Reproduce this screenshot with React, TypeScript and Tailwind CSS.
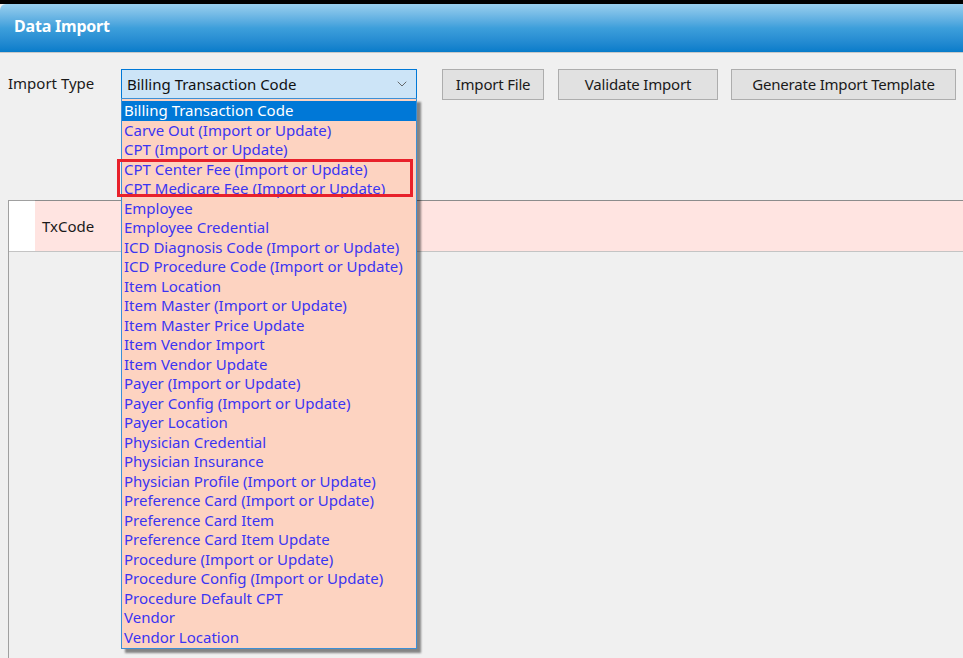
import { ChevronDown } from "lucide-react";

const items = [
  "Billing Transaction Code",
  "Carve Out (Import or Update)",
  "CPT (Import or Update)",
  "CPT Center Fee (Import or Update)",
  "CPT Medicare Fee (Import or Update)",
  "Employee",
  "Employee Credential",
  "ICD Diagnosis Code (Import or Update)",
  "ICD Procedure Code (Import or Update)",
  "Item Location",
  "Item Master (Import or Update)",
  "Item Master Price Update",
  "Item Vendor Import",
  "Item Vendor Update",
  "Payer (Import or Update)",
  "Payer Config (Import or Update)",
  "Payer Location",
  "Physician Credential",
  "Physician Insurance",
  "Physician Profile (Import or Update)",
  "Preference Card (Import or Update)",
  "Preference Card Item",
  "Preference Card Item Update",
  "Procedure (Import or Update)",
  "Procedure Config (Import or Update)",
  "Procedure Default CPT",
  "Vendor",
  "Vendor Location",
];

function Button({ label, className }: { label: string; className?: string }) {
  return (
    <button
      className={
        "h-[31px] border border-[#adadad] bg-[#e1e1e1] text-[15px] text-[#1a1a1a] tracking-[-0.2px] flex items-center justify-center " +
        (className ?? "")
      }
    >
      {label}
    </button>
  );
}

export default function App() {
  return (
    <div
      className="relative w-[963px] h-[658px] overflow-hidden bg-[#f0f0f0] flex flex-col"
      style={{ fontFamily: '"Noto Sans", "Open Sans", sans-serif' }}
    >
      <div className="h-[4px] bg-black shrink-0" />
      <div className="h-[49px] shrink-0 rounded-tl-[6px] bg-gradient-to-b from-[#98cfee] via-[#3d9fdb] to-[#077cca] flex items-center pl-[14px] pb-[5px] border-b border-[#c9c9c9]">
        <span className="text-white font-bold text-[16px] tracking-[-0.2px]">Data Import</span>
      </div>

      <div className="flex items-start pt-[16px] pl-[8px] shrink-0">
        <span className="text-[15px] text-[#1a1a1a] mt-[3px] w-[113px]">Import Type</span>
        <div className="relative w-[296px]">
          <div className="h-[30px] border border-[#0078d7] bg-[#cce4f7] flex items-center justify-between pl-[5px] pr-[6px]">
            <span className="text-[15px] text-[#111]">Billing Transaction Code</span>
            <ChevronDown size={16} strokeWidth={1.3} className="text-[#555]" />
          </div>
          <div className="absolute left-0 top-[29px] z-10 w-[296px] border border-[#3c8fd6] bg-[#fdd3c1] pt-[2px] pb-[1px] shadow-[4px_4px_2px_rgba(0,0,0,0.45)]">
            {items.map((it, i) => (
              <div
                key={it}
                className={
                  "h-[19.5px] leading-[19.5px] pl-[2px] text-[15px] whitespace-nowrap " +
                  (i === 0 ? "bg-[#0078d7] text-white" : "text-[#3b35f2]")
                }
              >
                {it}
              </div>
            ))}
            <div className="absolute left-[-5px] top-[60px] w-[296px] h-[38px] border-[3px] border-[#e8212b]" />
          </div>
        </div>
        <Button label="Import File" className="ml-[25px] w-[102px]" />
        <Button label="Validate Import" className="ml-[14px] w-[160px]" />
        <Button label="Generate Import Template" className="ml-[13px] w-[225px]" />
      </div>

      <div className="flex-1 mt-[100px] ml-[8px] border-l border-t border-[#a0a0a0] flex flex-col">
        <div className="flex h-[51px] border-b border-[#c4c4c4]">
          <div className="w-[26px] bg-white" />
          <div className="flex-1 bg-[#ffe4e1] flex items-center pl-[7px] border-t border-[#8c8c8c] -mt-px">
            <span className="text-[15px] text-[#1a1a1a]">TxCode</span>
          </div>
        </div>
        <div className="flex-1 bg-[#f0f0f0]" />
      </div>
    </div>
  );
}
